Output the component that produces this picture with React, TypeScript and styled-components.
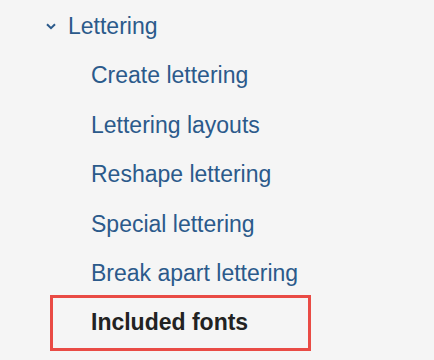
import React from "react";
import styled, { createGlobalStyle } from "styled-components";

const Global = createGlobalStyle`
  html, body { margin: 0; padding: 0; background: #f5f5f5; }
  body { font-family: "Liberation Sans", Arial, sans-serif; }
`;

const Nav = styled.nav`
  width: 434px;
  height: 360px;
  background: #f5f5f5;
  overflow: hidden;
`;

const List = styled.ul`
  list-style: none;
  margin: 0;
  padding: 2px 0 0;
`;

const Parent = styled.li`
  display: flex;
  align-items: center;
  height: 49.4px;
  padding-left: 46px;
  gap: 12px;
  font-size: 23px;
  line-height: 49.4px;
  color: #2b5a8b;
`;

const Chevron = styled.svg`
  width: 10px;
  height: 7px;
  flex: none;
  margin-top: 0px;
`;

const Item = styled.li<{ $active?: boolean }>`
  position: relative;
  height: 49.4px;
  padding-left: 91px;
  font-size: 23px;
  line-height: 49.4px;
  color: ${(p) => (p.$active ? "#222222" : "#2b5a8b")};
  font-weight: ${(p) => (p.$active ? 700 : 400)};
  white-space: nowrap;
`;

const Highlight = styled.span`
  position: absolute;
  left: 50px;
  width: 261px;
  top: -3.4px;
  height: 56px;
  box-sizing: border-box;
  border: 3px solid #e94b45;
  pointer-events: none;
`;

const items = [
  "Create lettering",
  "Lettering layouts",
  "Reshape lettering",
  "Special lettering",
  "Break apart lettering",
];

export default function App() {
  return (
    <>
      <Global />
      <Nav>
        <List>
          <Parent>
            <Chevron viewBox="0 0 10 7">
              <path d="M1 1.2 L5 5.2 L9 1.2" fill="none" stroke="#2b5a8b" strokeWidth="2" />
            </Chevron>
            Lettering
          </Parent>
          {items.map((t) => (
            <Item key={t}>{t}</Item>
          ))}
          <Item $active>
            Included fonts
            <Highlight />
          </Item>
        </List>
      </Nav>
    </>
  );
}
